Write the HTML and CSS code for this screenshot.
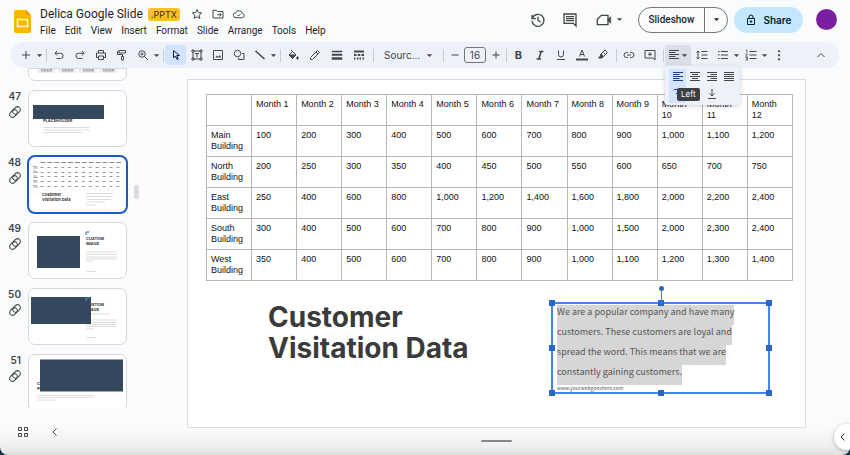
FILE: index.html
```html
<!DOCTYPE html>
<html lang="en">
<head>
<meta charset="utf-8">
<meta name="viewport" content="width=device-width, initial-scale=1">
<title>Delica Google Slide</title>
<link rel="stylesheet" href="styles.css">
</head>
<body>
<svg class="defs" aria-hidden="true">
  <symbol id="caret" viewBox="0 0 8 8"><path d="M1 2.5h6L4 5.8z" fill="currentColor"/></symbol>
  <symbol id="left" viewBox="0 0 24 24"><path d="M2 3h20M2 7h13M2 11h20M2 15h13M2 19h20"/></symbol>
  <symbol id="center" viewBox="0 0 24 24"><path d="M2 3h20M6 7h12M2 11h20M6 15h12M2 19h20"/></symbol>
  <symbol id="right" viewBox="0 0 24 24"><path d="M2 3h20M9 7h13M2 11h20M9 15h13M2 19h20"/></symbol>
  <symbol id="justify" viewBox="0 0 24 24"><path d="M2 3h20M2 7h20M2 11h20M2 15h20M2 19h20"/></symbol>
  <symbol id="rings" viewBox="0 0 24 24"><ellipse cx="9" cy="15" rx="8.500" ry="6" transform="rotate(-45 9 15)"/><ellipse cx="15" cy="9" rx="8.500" ry="6" transform="rotate(-45 15 9)"/></symbol>
  <symbol id="chevron" viewBox="0 0 24 24"><path d="M15 5l-7 7 7 7"/></symbol>
</svg>
<div class="app">
  <header class="header">
    <svg class="logo" viewBox="0 0 17 23" aria-hidden="true"><path d="M2 0h10l5 5v16a2 2 0 0 1-2 2H2a2 2 0 0 1-2-2V2a2 2 0 0 1 2-2z" fill="#fbb604"/><path d="M12 0l5 5h-5z" fill="#e8a000"/><path d="M3.500 9.500h10v7h-10z" fill="none" stroke="#fff5d6" stroke-width="1.500"/></svg>
    <div class="titles">
      <div class="title-row">
        <h1 class="title">Delica Google Slide</h1>
        <span class="badge">.PPTX</span>
        <button class="mini" aria-label="Star"><svg class="icon" viewBox="0 0 24 24"><path d="M12 3l2.700 6.200 6.800.6-5.100 4.500 1.500 6.700L12 17.500 6.100 21l1.500-6.700-5.100-4.500 6.800-.6z"/></svg></button>
        <button class="mini" aria-label="Move"><svg class="icon" viewBox="0 0 24 24"><path d="M2 4.500h7l2 2.500h11v13H2zM10 13.500h8M15 10l3.500 3.500L15 17"/></svg></button>
        <button class="mini" aria-label="Saved to cloud"><svg class="icon" viewBox="0 0 24 24"><path d="M6 19.500a5 5 0 0 1-.5-10 7 7 0 0 1 13.300 1.500A4.300 4.300 0 0 1 18.500 19.500zM8.500 13.500l2.500 2.500 4.500-4.500"/></svg></button>
      </div>
      <nav class="menus" aria-label="Menu">
        <button>File</button><button>Edit</button><button>View</button><button>Insert</button><button>Format</button><button>Slide</button><button>Arrange</button><button>Tools</button><button>Help</button>
      </nav>
    </div>
    <div class="actions">
      <button class="action" aria-label="Version history"><svg class="icon large" viewBox="0 0 24 24"><path d="M3 4v6h6M3.500 9.500A9 9 0 1 1 3 13M12 7v5.500l4 2.500"/></svg></button>
      <button class="action" aria-label="Comments"><svg class="icon large" viewBox="0 0 24 24"><path d="M3 3h18v18l-4-4H3zM6 7h12M6 10h12M6 13h12"/></svg></button>
      <button class="action meet" aria-label="Join a call"><svg class="icon large" viewBox="0 0 24 24"><path d="M8 5h10v14H2v-8z"/><path d="M18 11l4-4v10l-4-4z" fill="currentColor" stroke-width="1"/></svg><svg class="caret"><use href="#caret"/></svg></button>
      <div class="slideshow"><button class="show-main">Slideshow</button><button class="show-more" aria-label="Slideshow options"><svg class="caret"><use href="#caret"/></svg></button></div>
      <button class="share"><svg class="icon" viewBox="0 0 24 24"><path d="M5 9h14v12H5zM8 9V6a4 4 0 0 1 8 0v3"/><circle cx="12" cy="15" r="1.500" fill="currentColor"/></svg>Share</button>
      <button class="avatar" aria-label="Account"></button>
    </div>
  </header>

  <div class="toolbar" role="toolbar" aria-label="Editing tools">
    <div class="group">
      <button class="tool" aria-label="New slide"><svg class="icon" viewBox="0 0 24 24"><path d="M12 4v16M4 12h16"/></svg></button>
      <button class="drop" aria-label="New slide layout"><svg class="caret"><use href="#caret"/></svg></button>
    </div>
    <div class="group">
      <button class="tool" aria-label="Undo"><svg class="icon" viewBox="0 0 24 24"><path d="M8 4L4 8.500l4 4.500M4.500 8.500H15a5 5 0 0 1 0 10.500H7"/></svg></button>
      <button class="tool" aria-label="Redo"><svg class="icon" viewBox="0 0 24 24"><path d="M16 4l4 4.500-4 4.500M19.500 8.500H9A5 5 0 0 0 9 19h8"/></svg></button>
      <button class="tool" aria-label="Print"><svg class="icon" viewBox="0 0 24 24"><path d="M7 8V3h10v5M7 17H3V8h18v9h-4M7 14h10v7H7z"/></svg></button>
      <button class="tool" aria-label="Paint format"><svg class="icon" viewBox="0 0 24 24"><path d="M6 3h13v5H6zM6 5H3v6h10v4M11 15h4v7h-4z"/></svg></button>
      <button class="tool" aria-label="Zoom"><svg class="icon" viewBox="0 0 24 24"><circle cx="10" cy="10" r="6.500"/><path d="M15 15l7 7M7 10h6M10 7v6"/></svg></button>
      <button class="drop" aria-label="Zoom options"><svg class="caret"><use href="#caret"/></svg></button>
    </div>
    <div class="group">
      <button class="tool active" aria-label="Select"><svg class="icon" viewBox="0 0 24 24"><path d="M7 3v15l4-4 3 7 2.500-1-3-7H19z"/></svg></button>
      <button class="tool" aria-label="Text box"><svg class="icon" viewBox="0 0 24 24"><path d="M6 4h12M6 20h12M4 6v12M20 6v12M2 2h4v4H2zM18 2h4v4h-4zM2 18h4v4H2zM18 18h4v4h-4zM8 9h8M12 9v8"/></svg></button>
      <button class="tool" aria-label="Insert image"><svg class="icon" viewBox="0 0 24 24"><path d="M3 3h18v18H3z"/><path d="M6.500 17l3.500-4 2.500 2.500 3-3.500 3 5z" fill="currentColor" stroke="none"/></svg></button>
      <button class="tool" aria-label="Shape"><svg class="icon" viewBox="0 0 24 24"><circle cx="9" cy="9" r="6.500"/><path d="M18 9h4v12H11v-3"/></svg></button>
      <button class="tool" aria-label="Line"><svg class="icon bold" viewBox="0 0 24 24"><path d="M3 4l18 16"/></svg></button>
      <button class="drop" aria-label="Line options"><svg class="caret"><use href="#caret"/></svg></button>
    </div>
    <div class="group wide">
      <button class="tool" aria-label="Fill color"><svg class="icon" viewBox="0 0 24 24"><path d="M8 2l10 10-7 7-7-7 7-7"/><path d="M4 12h14l-7 7zM21 15c3 4 1 5.500 0 5.500S18 19 21 15z" fill="currentColor"/></svg></button>
      <button class="tool" aria-label="Border color"><svg class="icon" viewBox="0 0 24 24"><path d="M3 21v-4L17 3l4 4L7 21zM14 6l4 4"/></svg></button>
      <button class="tool" aria-label="Border weight"><svg class="icon" viewBox="0 0 24 24"><path d="M2 4h20v2H2zM2 10h20v3H2zM2 17h20v4H2z" fill="currentColor" stroke-width="1"/></svg></button>
      <button class="tool" aria-label="Border dash"><svg class="icon" viewBox="0 0 24 24"><path d="M2 5h20" stroke-width="4"/><path d="M2 12h5M9.500 12h5M17 12h5M2 19h3M8 19h3M13 19h3M19 19h3" stroke-width="4"/></svg></button>
    </div>
    <div class="group font">
      <select aria-label="Font"><option>Sourc...</option></select>
      <svg class="caret"><use href="#caret"/></svg>
    </div>
    <div class="group size">
      <button class="step" aria-label="Decrease font size"><svg class="icon" viewBox="0 0 24 24"><path d="M5 12h14"/></svg></button>
      <input aria-label="Font size" value="16">
      <button class="step" aria-label="Increase font size"><svg class="icon" viewBox="0 0 24 24"><path d="M12 5v14M5 12h14"/></svg></button>
    </div>
    <div class="group">
      <button class="tool glyph" aria-label="Bold"><b>B</b></button>
      <button class="tool" aria-label="Italic"><svg class="icon bold" viewBox="0 0 24 24"><path d="M10 5h9M5 20h9M14.500 5l-5 15"/></svg></button>
      <button class="tool" aria-label="Underline"><svg class="icon" viewBox="0 0 24 24"><path d="M7 3v8a5 5 0 0 0 10 0V3M4 21h16"/></svg></button>
      <button class="tool" aria-label="Text color"><svg class="icon" viewBox="0 0 24 24"><path d="M7 15l5-13 5 13M8.500 11h7"/><path d="M0 21h24" stroke-width="4"/></svg></button>
      <button class="tool" aria-label="Highlight color"><svg class="icon" viewBox="0 0 24 24"><path d="M8 10l8-8 5 5-8 8H8z"/><path d="M8 10l5 5-3 3H3l4-4zM13 7l3 3" fill="currentColor"/></svg></button>
    </div>
    <div class="group">
      <button class="tool" aria-label="Insert link"><svg class="icon" viewBox="0 0 24 24"><path d="M10 7H7a5 5 0 0 0 0 10h3M14 7h3a5 5 0 0 1 0 10h-3M8 12h8"/></svg></button>
      <button class="tool" aria-label="Add comment"><svg class="icon" viewBox="0 0 24 24"><path d="M2 3h20v19l-4-4H2zM12 6.500v8M8 10.500h8"/></svg></button>
    </div>
    <div class="group">
      <div class="align">
        <button class="align-button" aria-label="Align" aria-expanded="true"><svg class="icon"><use href="#left"/></svg><svg class="caret"><use href="#caret"/></svg></button>
        <div class="align-menu">
          <button class="chosen" aria-label="Left"><svg class="icon"><use href="#left"/></svg></button>
          <button aria-label="Center"><svg class="icon"><use href="#center"/></svg></button>
          <button aria-label="Right"><svg class="icon"><use href="#right"/></svg></button>
          <button aria-label="Justified"><svg class="icon"><use href="#justify"/></svg></button>
          <button class="chosen" aria-label="Top"><svg class="icon" viewBox="0 0 24 24"><path d="M4 3h16M12 21V8M8 12l4-4 4 4"/></svg></button>
          <button aria-label="Middle"><svg class="icon" viewBox="0 0 24 24"><path d="M4 12h16M12 2v6M12 16v6"/></svg></button>
          <button aria-label="Bottom"><svg class="icon" viewBox="0 0 24 24"><path d="M4 21h16M12 2v13M7 11l5 5 5-5"/></svg></button>
          <span class="tooltip" role="tooltip">Left</span>
        </div>
      </div>
      <button class="tool" aria-label="Line spacing"><svg class="icon" viewBox="0 0 24 24"><path d="M11 5h12M11 12h12M11 19h12M4 4v16M1 7l3-3 3 3M1 17l3 3 3-3"/></svg></button>
      <button class="tool" aria-label="Bulleted list"><svg class="icon" viewBox="0 0 24 24"><path d="M8 5h14M8 12h14M8 19h14M2 5h3M2 12h3M2 19h3"/></svg></button>
      <button class="drop" aria-label="Bulleted list options"><svg class="caret"><use href="#caret"/></svg></button>
      <button class="tool" aria-label="Numbered list"><svg class="icon" viewBox="0 0 24 24"><path d="M9 5h14M9 12h14M9 19h14"/><path d="M2 2h2v5M1 10h4l-4 4.500h4M1 17h4v5H1M2 19.500h3" stroke-width="1.500"/></svg></button>
      <button class="drop" aria-label="Numbered list options"><svg class="caret"><use href="#caret"/></svg></button>
      <button class="tool" aria-label="More"><svg class="icon" viewBox="0 0 24 24"><path d="M10.500 3h3v3h-3zM10.500 11h3v3h-3zM10.500 19h3v3h-3z" fill="currentColor" stroke-width="1"/></svg></button>
    </div>
    <button class="tool collapse" aria-label="Hide the menus"><svg class="icon" viewBox="0 0 24 24"><path d="M5 16l7-7 7 7"/></svg></button>
  </div>

  <div class="workspace">
    <aside class="sidebar">
      <ol class="filmstrip">
        <li class="item partial">
          <svg class="thumb" viewBox="0 0 99 13" aria-hidden="true"><g fill="#eee"><path d="M9 0h18v5H9zM30 0h18v5H30zM51 0h18v5H51zM71 0h18v5H71z"/></g><path d="M13 2h11M34 2h11M55 2h11M75 2h11" stroke="#aaa" stroke-width="3"/><path d="M14 2h9M35 2h9M56 2h9M76 2h9" stroke="#ddd" stroke-dasharray="2 1"/></svg>
        </li>
        <li class="item">
          <div class="marker"><span>47</span><svg class="icon"><use href="#rings"/></svg></div>
          <svg class="thumb" viewBox="0 0 99 57"><text x="15" y="32" class="tiny">PLACEHOLDER</text><path d="M5 15h71v14H5z" class="navy"/><path d="M15 37.500h47M15 40h47M15 42.500h40" class="lines"/></svg>
        </li>
        <li class="item current">
          <div class="marker"><span>48</span><svg class="icon"><use href="#rings"/></svg></div>
          <svg class="thumb" viewBox="0 0 99 57"><path d="M12.500 6.500H93" stroke="#888" stroke-dasharray="5 1.900"/><path d="M12.500 11.500h80M12.500 16.500h80M12.500 20.500h80M12.500 25.500h80M12.500 30.500h80" stroke="#999" stroke-dasharray="3 3.900"/><path d="M5 10.500h4M5 12h5M5 15h4M5 16.500h5M5 20h4M5 21.500h5M5 24.500h4M5 26h5M5 29.500h4M5 31h5" stroke="#888" stroke-width=".7"/><text x="14" y="40" class="tiny">Customer</text><text x="14" y="45" class="tiny">Visitation Data</text><path d="M58 37.500h27M58 40.500h26M58 43.500h25M58 46h19M58 49h10" class="lines"/></svg>
        </li>
        <li class="item">
          <div class="marker"><span>49</span><svg class="icon"><use href="#rings"/></svg></div>
          <svg class="thumb" viewBox="0 0 99 57"><path d="M9 14h43v32H9z" class="navy"/><path d="M58 13V10h3.500" fill="none" stroke="#2877a8"/><text x="58" y="18" class="tiny">CUSTOM</text><text x="58" y="23" class="tiny">IMAGE</text><path d="M58 30h31M58 32.500h31M58 35h31M58 37h30M58 39h7M58 49.500h10" class="lines"/></svg>
        </li>
        <li class="item">
          <div class="marker"><span>50</span><svg class="icon"><use href="#rings"/></svg></div>
          <svg class="thumb" viewBox="0 0 99 57"><text x="58" y="18" class="tiny">CUSTOM</text><text x="58" y="23" class="tiny">IMAGE</text><path d="M58 26h24M58 32h31M58 34.500h31M58 36.500h31M58 38.500h30M58 41h8M58 49.500h10" class="lines"/><path d="M3 9h60v27H3z" class="navy"/><path d="M58 13V10h3.500" fill="none" stroke="#4f8fc0"/></svg>
        </li>
        <li class="item">
          <div class="marker"><span>51</span><svg class="icon"><use href="#rings"/></svg></div>
          <svg class="thumb" viewBox="0 0 99 57"><text x="9" y="31" class="tiny">CUSTOM</text><text x="9" y="36" class="tiny">PLACEHOLDER</text><path d="M12 5.500h83v32H12z" class="navy"/><path d="M9 41.500h56M9 43.500h57M9 46h19" class="lines"/></svg>
        </li>
      </ol>
      <span class="scroll-thumb"></span>
      <div class="sidebar-footer">
        <button aria-label="Grid view"><svg class="icon" viewBox="0 0 24 24"><path d="M3 3h6v6H3zM15 3h6v6h-6zM3 15h6v6H3zM15 15h6v6h-6z"/></svg></button>
        <button aria-label="Hide filmstrip"><svg class="icon"><use href="#chevron"/></svg></button>
      </div>
    </aside>
    <main class="canvas">
      <article class="slide">
        <table class="visits">
          <thead><tr><th></th><th>Month 1</th><th>Month 2</th><th>Month 3</th><th>Month 4</th><th>Month 5</th><th>Month 6</th><th>Month 7</th><th>Month 8</th><th>Month 9</th><th>Month 10</th><th>Month 11</th><th>Month 12</th></tr></thead>
          <tbody>
            <tr><th>Main Building</th><td>100</td><td>200</td><td>300</td><td>400</td><td>500</td><td>600</td><td>700</td><td>800</td><td>900</td><td>1,000</td><td>1,100</td><td>1,200</td></tr>
            <tr><th>North Building</th><td>200</td><td>250</td><td>300</td><td>350</td><td>400</td><td>450</td><td>500</td><td>550</td><td>600</td><td>650</td><td>700</td><td>750</td></tr>
            <tr><th>East Building</th><td>250</td><td>400</td><td>600</td><td>800</td><td>1,000</td><td>1,200</td><td>1,400</td><td>1,600</td><td>1,800</td><td>2,000</td><td>2,200</td><td>2,400</td></tr>
            <tr><th>South Building</th><td>300</td><td>400</td><td>500</td><td>600</td><td>700</td><td>800</td><td>900</td><td>1,000</td><td>1,500</td><td>2,000</td><td>2,300</td><td>2,400</td></tr>
            <tr><th>West Building</th><td>350</td><td>400</td><td>500</td><td>600</td><td>700</td><td>800</td><td>900</td><td>1,000</td><td>1,100</td><td>1,200</td><td>1,300</td><td>1,400</td></tr>
          </tbody>
        </table>
        <div class="caption">
          <h2>Customer<br>Visitation Data</h2>
          <div class="textbox">
            <p class="copy"><mark>We are a popular company and have many customers. These customers are loyal and spread the word. This means that we are constantly gaining customers.</mark></p>
            <p class="site">www.yourwebgoeshere.com</p>
            <i class="handle n"></i><i class="handle s"></i><i class="handle w"></i><i class="handle e"></i>
            <i class="handle n w"></i><i class="handle n e"></i><i class="handle s w"></i><i class="handle s e"></i>
            <i class="rotate"></i>
          </div>
        </div>
      </article>
      <div class="notes-bar"><span class="notes-grip"></span></div>
    </main>
    <button class="panel-toggle" aria-label="Show side panel"><svg class="icon"><use href="#chevron"/></svg></button>
  </div>
</div>
</body>
</html>
```
FILE: styles.css
```css
* { box-sizing: border-box; }
body {
  margin: 0;
  background: #17324d;
  color: #1f1f1f;
  font-family: Inter, Roboto, sans-serif;
  font-size: 10px;
}
button {
  display: flex;
  align-items: center;
  justify-content: center;
  margin: 0;
  padding: 0;
  border: 0;
  background: none;
  color: inherit;
  font: inherit;
}
h1, h2, p, ol { margin: 0; padding: 0; }
.defs { position: absolute; width: 0; height: 0; }
.app {
  display: flex;
  flex-direction: column;
  height: 100vh;
  overflow: hidden;
  border-radius: 0 0 8px 8px;
  background: linear-gradient(to top, #dedfe0, #eff0f2 9px, #f9fbfd 27px);
}
.icon {
  flex: none;
  width: 12px;
  height: 12px;
  fill: none;
  stroke: currentColor;
  stroke-width: 2;
}
.icon.large { width: 16px; height: 16px; }
.icon.bold { stroke-width: 3; }
.caret { flex: none; width: 7px; height: 7px; }

/* Header */
.header {
  display: flex;
  align-items: flex-start;
  flex: none;
  height: 42px;
  padding: 0 13px 0 14px;
  color: #444746;
}
.logo { flex: none; width: 17px; height: 23px; margin-top: 10px; }
.titles { margin: 6px 0 0 9px; }
.title-row { display: flex; align-items: center; height: 16px; }
.title {
  color: #1f1f1f;
  font-family: Roboto, sans-serif;
  font-size: 12px;
  font-weight: 400;
  line-height: 16px;
}
.badge {
  margin: 0 7px 0 5px;
  padding: 0 3px;
  border-radius: 3px;
  background: #fbbf2d;
  color: #3c3000;
  font-size: 9px;
  line-height: 13px;
}
.mini { width: 21px; height: 16px; }
.menus {
  display: flex;
  gap: 9px;
  height: 16px;
  color: #1f1f1f;
  font-family: Roboto, sans-serif;
}
.actions { display: flex; align-items: center; height: 25px; margin: 7px 0 0 auto; }
.action { width: 32px; height: 24px; }
.meet { width: 46px; gap: 4px; }
.slideshow {
  display: flex;
  height: 26px;
  margin: 0 6px;
  border: 1px solid #747775;
  border-radius: 13px;
  color: #1f1f1f;
}
.show-main { width: 65px; font-family: Roboto, sans-serif; font-weight: 500; }
.show-more { width: 23px; border-left: 1px solid #747775; }
.share {
  gap: 6px;
  width: 69px;
  height: 26px;
  border-radius: 13px;
  background: #c2e7ff;
  color: #001d35;
  font-weight: 600;
}
.avatar { width: 21px; height: 21px; margin-left: 13px; border-radius: 50%; background: #7b1fa2; }

/* Toolbar */
.toolbar {
  position: relative;
  z-index: 2;
  display: flex;
  align-items: center;
  flex: none;
  height: 26px;
  margin: 0 11px;
  padding: 0 8px 0 4px;
  border-radius: 13px;
  background: #edf2fa;
  color: #444746;
}
.group { display: flex; align-items: center; }
.group + .group::before {
  width: 1px;
  height: 13px;
  margin: 0 1px 0 3px;
  background: #c7cbd1;
  content: "";
}
.tool { width: 21px; height: 20px; }
.wide .tool { width: 22px; }
.drop { width: 7px; height: 20px; }
.active { border-radius: 3px; background: #d3e3fd; color: #041e49; }
.glyph { font-size: 11px; }
.font select {
  width: 51px;
  height: 20px;
  padding: 0 0 0 9px;
  border: 0;
  appearance: none;
  background: none;
  color: inherit;
  font: inherit;
}
.font .caret { margin-right: 7px; }
.step { width: 19px; height: 20px; }
.size input {
  width: 22px;
  height: 16px;
  padding: 0;
  border: 1px solid #747775;
  border-radius: 3px;
  background: none;
  color: inherit;
  font: inherit;
  text-align: center;
}
.size + .group::before { margin-left: 1px; }
.align { position: relative; }
.align-button {
  gap: 1px;
  width: 26px;
  height: 20px;
  border-radius: 3px 3px 0 0;
  background: #dadfe7;
}
.align-menu {
  position: absolute;
  top: 21px;
  left: 0;
  display: grid;
  grid-template-columns: repeat(4, 17px);
  grid-template-rows: 16px 18px;
  padding: 3px 3px 2px 4px;
  border-radius: 3px;
  background: #edf2fa;
  box-shadow: 0 1px 4px rgba(60, 64, 67, 0.25);
}
.chosen { background: #d3e3fd; color: #1b4480; }
.tooltip {
  position: absolute;
  top: 22px;
  left: 12px;
  padding: 0 4px;
  border-radius: 2px;
  background: #3c4043;
  color: #fff;
  font-size: 8px;
  line-height: 13px;
}
.collapse { margin-left: auto; }

/* Filmstrip */
.workspace { position: relative; display: flex; flex: 1; min-height: 0; }
.sidebar {
  position: relative;
  display: flex;
  flex-direction: column;
  flex: none;
  width: 187px;
}
.filmstrip {
  display: flex;
  flex-direction: column;
  gap: 9px;
  flex: 1;
  min-height: 0;
  overflow: hidden;
  list-style: none;
}
.item { display: flex; justify-content: flex-end; flex: none; gap: 7px; width: 127px; }
.marker {
  display: flex;
  flex-direction: column;
  align-items: flex-end;
  gap: 3px;
  color: #444746;
  font-weight: 600;
  line-height: 13px;
}
.thumb {
  width: 99px;
  height: 57px;
  border-radius: 7px;
  outline: 1px solid #d5d7da;
  outline-offset: -1px;
  background: #fff;
}
.current .thumb { outline: 2px solid #1b5cc4; outline-offset: -1px; }
.partial .thumb { height: 13px; border-radius: 0 0 7px 7px; }
.tiny { fill: #333; font: bold 4px Inter, sans-serif; }
.navy { fill: #35475d; }
.lines { stroke: #bbb; stroke-width: 0.5; }
.scroll-thumb {
  position: absolute;
  top: 117px;
  left: 134px;
  width: 5px;
  height: 14px;
  border-radius: 3px;
  background: #dadce0;
}
.sidebar-footer {
  display: flex;
  gap: 20px;
  flex: none;
  height: 47px;
  padding: 17px;
  color: #444746;
}
.sidebar-footer button { height: 13px; }

/* Slide */
.canvas {
  display: flex;
  flex-direction: column;
  flex: 1;
  min-width: 0;
  padding: 11px 44px 0 0;
}
.slide { flex: 1; padding: 14px 12px 0 18px; border: 1px solid #dadce0; background: #fff; }
.visits {
  width: 100%;
  border-collapse: collapse;
  table-layout: fixed;
  color: #111;
  font: 9px/11px "Liberation Sans", Arial, sans-serif;
}
.visits th, .visits td {
  height: 31px;
  padding: 4px;
  border: 1px solid #b7b7b7;
  font-weight: 400;
  text-align: left;
  vertical-align: top;
}
.caption {
  display: flex;
  align-items: flex-start;
  justify-content: space-between;
  padding: 21px 23px 0 62px;
}
.caption h2 { color: #3b3b3b; font: bold 28px/31px Inter, sans-serif; }
.textbox {
  position: relative;
  width: 219px;
  height: 92px;
  padding: 0 20px 0 4px;
  border: 2px solid #4285f4;
  color: #555;
  font-family: "Noto Sans CJK SC", sans-serif;
}
.copy { margin-top: -2px; font-size: 9px; line-height: 20px; }
.copy mark {
  padding-bottom: 7px;
  background: #d6d6d6;
  color: inherit;
}
.site { color: #555; font-size: 5px; line-height: 12px; }
.handle {
  position: absolute;
  top: calc(50% - 3px);
  left: calc(50% - 3px);
  width: 6px;
  height: 6px;
  background: #2a66c8;
}
.handle.n { top: -4px; }
.handle.s { top: auto; bottom: -4px; }
.handle.w { left: -4px; }
.handle.e { right: -4px; left: auto; }
.rotate {
  position: absolute;
  bottom: 100%;
  left: 50%;
  width: 1px;
  height: 16px;
  background: #4285f4;
}
.rotate::before {
  position: absolute;
  top: -2px;
  left: -2px;
  width: 5px;
  height: 5px;
  border-radius: 50%;
  background: #2a66c8;
  content: "";
}
.notes-bar { display: flex; justify-content: center; height: 27px; padding-top: 12px; }
.notes-grip { width: 31px; height: 2px; border-radius: 1px; background: #85878a; }
.panel-toggle {
  position: absolute;
  right: -10px;
  bottom: 5px;
  width: 26px;
  height: 26px;
  padding-right: 8px;
  border-radius: 50%;
  background: #fff;
  box-shadow: 0 1px 4px rgba(60, 64, 67, 0.35);
}
```
